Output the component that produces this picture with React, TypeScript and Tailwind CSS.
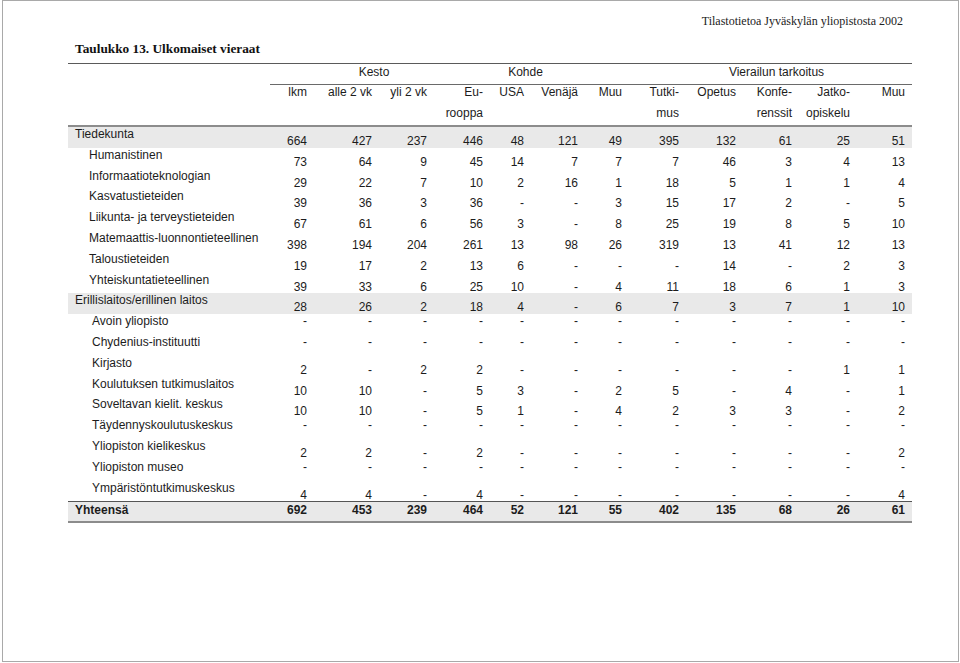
import React from 'react';

const colW = [
  'w-[44px]',
  'w-[65px]',
  'w-[55px]',
  'w-[56px]',
  'w-[41px]',
  'w-[54px]',
  'w-[44px]',
  'w-[57px]',
  'w-[57px]',
  'w-[56px]',
  'w-[58px]',
  'w-[55px]',
];

type RowData = {
  label: string;
  vals: string[];
  indent: string;
  band?: boolean;
  same?: boolean;
};

const dash = Array(12).fill('-');

const rows: RowData[] = [
  { label: 'Tiedekunta', vals: ['664', '427', '237', '446', '48', '121', '49', '395', '132', '61', '25', '51'], indent: 'pl-[7px]', band: true },
  { label: 'Humanistinen', vals: ['73', '64', '9', '45', '14', '7', '7', '7', '46', '3', '4', '13'], indent: 'pl-[21px]' },
  { label: 'Informaatioteknologian', vals: ['29', '22', '7', '10', '2', '16', '1', '18', '5', '1', '1', '4'], indent: 'pl-[21px]' },
  { label: 'Kasvatustieteiden', vals: ['39', '36', '3', '36', '-', '-', '3', '15', '17', '2', '-', '5'], indent: 'pl-[21px]' },
  { label: 'Liikunta- ja terveystieteiden', vals: ['67', '61', '6', '56', '3', '-', '8', '25', '19', '8', '5', '10'], indent: 'pl-[21px]' },
  { label: 'Matemaattis-luonnontieteellinen', vals: ['398', '194', '204', '261', '13', '98', '26', '319', '13', '41', '12', '13'], indent: 'pl-[21px]' },
  { label: 'Taloustieteiden', vals: ['19', '17', '2', '13', '6', '-', '-', '-', '14', '-', '2', '3'], indent: 'pl-[21px]' },
  { label: 'Yhteiskuntatieteellinen', vals: ['39', '33', '6', '25', '10', '-', '4', '11', '18', '6', '1', '3'], indent: 'pl-[21px]' },
  { label: 'Erillislaitos/erillinen laitos', vals: ['28', '26', '2', '18', '4', '-', '6', '7', '3', '7', '1', '10'], indent: 'pl-[7px]', band: true },
  { label: 'Avoin yliopisto', vals: dash, indent: 'pl-[24px]', same: true },
  { label: 'Chydenius-instituutti', vals: dash, indent: 'pl-[24px]', same: true },
  { label: 'Kirjasto', vals: ['2', '-', '2', '2', '-', '-', '-', '-', '-', '-', '1', '1'], indent: 'pl-[24px]' },
  { label: 'Koulutuksen tutkimuslaitos', vals: ['10', '10', '-', '5', '3', '-', '2', '5', '-', '4', '-', '1'], indent: 'pl-[24px]' },
  { label: 'Soveltavan kielit. keskus', vals: ['10', '10', '-', '5', '1', '-', '4', '2', '3', '3', '-', '2'], indent: 'pl-[24px]' },
  { label: 'Täydennyskoulutuskeskus', vals: dash, indent: 'pl-[24px]', same: true },
  { label: 'Yliopiston kielikeskus', vals: ['2', '2', '-', '2', '-', '-', '-', '-', '-', '-', '-', '2'], indent: 'pl-[24px]' },
  { label: 'Yliopiston museo', vals: dash, indent: 'pl-[24px]', same: true },
  { label: 'Ympäristöntutkimuskeskus', vals: ['4', '4', '-', '4', '-', '-', '-', '-', '-', '-', '-', '4'], indent: 'pl-[24px]' },
];

const totals = ['692', '453', '239', '464', '52', '121', '55', '402', '135', '68', '26', '61'];

const heads: [string, string][] = [
  ['lkm', ''],
  ['alle 2 vk', ''],
  ['yli 2 vk', ''],
  ['Eu-', 'rooppa'],
  ['USA', ''],
  ['Venäjä', ''],
  ['Muu', ''],
  ['Tutki-', 'mus'],
  ['Opetus', ''],
  ['Konfe-', 'renssit'],
  ['Jatko-', 'opiskelu'],
  ['Muu', ''],
];

const DataRow = ({ row }: { row: RowData }) => (
  <div className={`flex h-[20.8px] ${row.band ? 'bg-[#e9e9e9]' : ''}`}>
    <div className={`w-[202px] shrink-0 whitespace-nowrap leading-[15px] ${row.indent}`}>{row.label}</div>
    {row.vals.map((v, i) => (
      <div
        key={i}
        className={`${colW[i]} shrink-0 pr-[7px] text-right leading-[15px] ${row.same ? '' : 'pt-[7px]'}`}
      >
        {v}
      </div>
    ))}
  </div>
);

const App: React.FC = () => {
  return (
    <div className="w-[960px] h-[663px] bg-white overflow-hidden">
      <div className="ml-[2px] w-[957px] h-[662px] border border-[#a9a9a9]">
        <div className="mt-[12px] flex justify-end pr-[55px]">
          <span className="font-['Liberation_Serif',serif] text-[12px] leading-[16px] text-[#222]">
            Tilastotietoa Jyväskylän yliopistosta 2002
          </span>
        </div>

        <h1 className="mt-[11px] ml-[72px] font-['Liberation_Serif',serif] text-[13.3px] leading-[17px] font-bold text-[#111]">
          Taulukko 13. Ulkomaiset vieraat
        </h1>

        <div className="mt-[6px] ml-[65px] w-[844px] font-['Liberation_Sans',Arial,sans-serif] text-[12px] text-[#1c1c1c]">
          {/* group headers */}
          <div className="flex border-t border-[#5a5a5a]">
            <div className="w-[202px] shrink-0" />
            <div className="flex h-[21px] flex-1 border-b border-[#6a6a6a] leading-[16px]">
              <div className="w-[44px] shrink-0" />
              <div className="w-[120px] shrink-0 text-center">Kesto</div>
              <div className="w-[195px] shrink-0 pr-[12px] text-center">Kohde</div>
              <div className="w-[283px] shrink-0 pl-[12px] text-center">Vierailun tarkoitus</div>
            </div>
          </div>

          {/* column headers */}
          <div className="flex h-[42px] border-b-2 border-[#8c8c8c]">
            <div className="w-[202px] shrink-0" />
            {heads.map(([a, b], i) => (
              <div key={i} className={`${colW[i]} shrink-0 pr-[7px] text-right whitespace-nowrap`}>
                <div className="h-[14px] leading-[14px]">{a}</div>
                <div className="mt-[7px] h-[14px] leading-[14px]">{b}</div>
              </div>
            ))}
          </div>

          {rows.map((r) => (
            <DataRow key={r.label} row={r} />
          ))}

          {/* total */}
          <div className="flex h-[22px] border-t border-[#555] border-b-2 border-b-[#8c8c8c] bg-[#e9e9e9] font-bold">
            <div className="w-[202px] shrink-0 pl-[7px] leading-[16px]">Yhteensä</div>
            {totals.map((v, i) => (
              <div key={i} className={`${colW[i]} shrink-0 pr-[7px] text-right leading-[16px]`}>
                {v}
              </div>
            ))}
          </div>
        </div>
      </div>
    </div>
  );
};

export default App;
